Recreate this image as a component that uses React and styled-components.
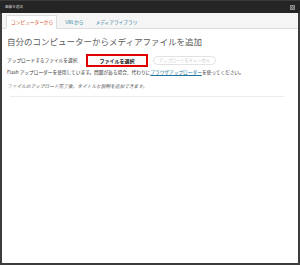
import React from 'react'
import styled, { createGlobalStyle } from 'styled-components'

const Global = createGlobalStyle`
	html, body { margin: 0; padding: 0; background: #fff; }
	body { font-family: "Noto Sans CJK JP", "Liberation Sans", sans-serif; }
`

const Frame = styled.div`
	width: 300px;
	height: 265px;
	box-sizing: border-box;
	display: flex;
	flex-direction: column;
	background: #fff;
	border: 2px solid #3c3c3c;
	border-top: none;
`

const TitleBar = styled.div`
	height: 13px;
	flex: none;
	display: flex;
	align-items: center;
	justify-content: space-between;
	padding: 0 5px 0 5px;
	margin: 0 -2px;
	background: #252525;
	border-top: 1px solid #3a3a3a;
	box-sizing: border-box;
`

const Title = styled.span`
	font-size: 3.6px;
	color: #cfcfcf;
	line-height: 1;
`

const Close = styled.span`
	width: 5px;
	height: 5px;
	background: #8a8a8a;
	display: flex;
	align-items: center;
	justify-content: center;
	svg { display: block; }
`

const Tabs = styled.div`
	height: 16px;
	flex: none;
	display: flex;
	align-items: flex-end;
	gap: 3px;
	padding: 0 0 0 4px;
	background: #f5f5f5;
	border-bottom: 1px solid #dcdcdc;
	box-sizing: border-box;
`

const Tab = styled.div`
	font-size: 4.7px;
	line-height: 1;
	height: 14px;
	display: flex;
	align-items: center;
	padding: 0 3px 0 4px;
	margin-bottom: -1px;
	box-sizing: border-box;
	color: ${p => (p.active ? '#d54e21' : '#21759b')};
	background: ${p => (p.active ? '#fff' : 'transparent')};
	border: 1px solid ${p => (p.active ? '#dcdcdc' : 'transparent')};
	border-bottom-color: ${p => (p.active ? '#fff' : 'transparent')};
`

const Content = styled.div`
	padding: 6px 14px 0 5px;
	display: flex;
	flex-direction: column;
`

const Heading = styled.h3`
	margin: 0 0 7px;
	font-size: 8.5px;
	font-weight: normal;
	line-height: 12px;
	color: #5b5b5b;
`

const Row = styled.div`
	display: flex;
	align-items: center;
	font-size: 4.7px;
	color: #333;
	line-height: 1;
`

const Label = styled.span`
	width: 79px;
`

const SelectButton = styled.span`
	width: 62px;
	height: 13px;
	box-sizing: border-box;
	display: flex;
	align-items: center;
	justify-content: center;
	border: 2px solid #e00000;
	background: #fafafa;
	font-size: 5px;
	font-weight: bold;
	color: #111;
`

const CancelButton = styled.span`
	height: 9px;
	width: 63px;
	box-sizing: border-box;
	display: flex;
	align-items: center;
	justify-content: center;
	border: 1px solid #e2e2e2;
	border-radius: 5px;
	color: #c8c8c8;
	font-size: 4.3px;
	margin-left: 5px;
`

const Line = styled.p`
	margin: ${p => p.gap}px 0 0;
	font-size: 4.7px;
	line-height: 6px;
	font-style: ${p => (p.italic ? 'italic' : 'normal')};
	color: ${p => (p.italic ? '#555' : '#333')};
	a { color: #21759b; text-decoration: underline; }
`

const Rule = styled.hr`
	margin: 7px 0 0 3px;
	border: none;
	border-top: 1px solid #ececec;
`

export default function App() {
	return (
		<>
			<Global />
			<Frame>
				<TitleBar>
					<Title>画像を追加</Title>
					<Close>
						<svg width="3" height="3" viewBox="0 0 3 3">
							<path d="M0 0L3 3M3 0L0 3" stroke="#444" strokeWidth="0.7" />
						</svg>
					</Close>
				</TitleBar>
				<Tabs>
					<Tab active>コンピューターから</Tab>
					<Tab>URLから</Tab>
					<Tab>メディアライブラリ</Tab>
				</Tabs>
				<Content>
					<Heading>自分のコンピューターからメディアファイルを追加</Heading>
					<Row>
						<Label>アップロードするファイルを選択</Label>
						<SelectButton>ファイルを選択</SelectButton>
						<CancelButton>アップロードをキャンセル</CancelButton>
					</Row>
					<Line gap={2}>
						Flash アップローダーを使用しています。問題がある場合、代わりに<a href="#">ブラウザアップローダー</a>を使ってください。
					</Line>
					<Line gap={8} italic>ファイルのアップロード完了後、タイトルと説明を追加できます。</Line>
					<Rule />
				</Content>
			</Frame>
		</>
	)
}
